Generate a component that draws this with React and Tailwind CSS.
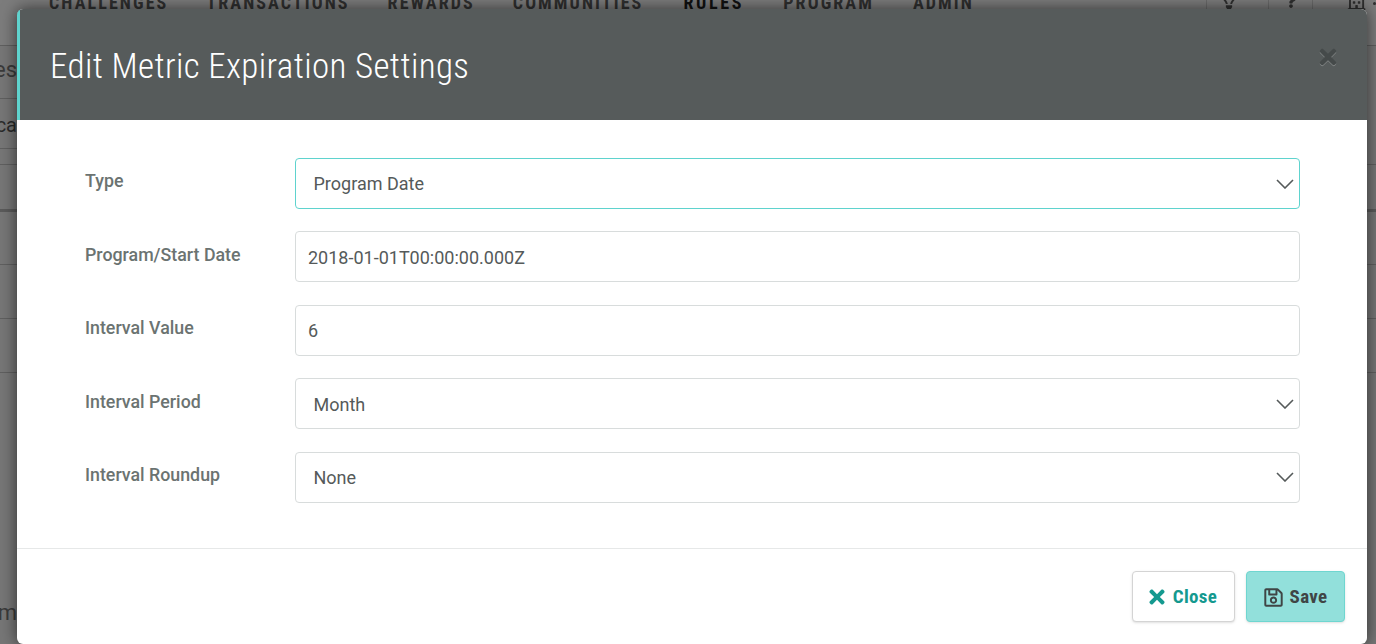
import React from 'react';
import { FaTimes, FaRegSave, FaRegLightbulb, FaQuestion, FaRegBuilding } from 'react-icons/fa';

const navItems = [
    { label: 'CHALLENGES', cls: 'text-[#2f2f2f]' },
    { label: 'TRANSACTIONS', cls: 'text-[#2f2f2f]' },
    { label: 'REWARDS', cls: 'text-[#2f2f2f]' },
    { label: 'COMMUNITIES', cls: 'text-[#2f2f2f]' },
    { label: 'RULES', cls: 'ml-[2px] tracking-[2.7px] text-[#111111]' },
    { label: 'PROGRAM', cls: 'ml-[1px] text-[#2f2f2f]' },
    { label: 'ADMIN', cls: 'ml-[1px] text-[#2f2f2f]' },
];

const Field = ({ label, value, select, active }) => (
    <div className="flex h-[51px] items-start">
        <label className="w-[210px] shrink-0 pt-[12.4px] text-[17.8px] font-medium leading-[22px] text-[#6b7371]">
            {label}
        </label>
        <div
            className={`flex h-[51px] flex-1 items-center justify-between rounded-[4px] border bg-white text-[18px] text-[#555a5a] ${
                active ? 'border-[#5fd3ce]' : 'border-[#d8dcdc]'
            } ${select ? 'pl-[17.5px] pr-[4px]' : 'pl-[12px]'}`}
        >
            <span className="pt-[0.8px]">{value}</span>
            {select && (
                <svg width="18" height="10" viewBox="0 0 18 10" fill="none" className="mr-[1px]">
                    <polyline points="1,1 9,9 17,1" stroke="#555a5a" strokeWidth="1.6" />
                </svg>
            )}
        </div>
    </div>
);

const App = () => {
    return (
        <div className="relative h-[644px] w-full overflow-hidden bg-[#767676] font-['Roboto',sans-serif]">
            {/* page behind the dialog */}
            <div className="flex h-[46px] items-start justify-between overflow-hidden border-b border-[#5f5f5f] bg-[#7c7c7c]">
                <div className="-mt-[6px] flex gap-[38px] pl-[49px] text-[18px] font-bold leading-[18px] tracking-[2.1px] [font-stretch:75%]">
                    {navItems.map((n) => (
                        <span key={n.label} className={n.cls}>{n.label}</span>
                    ))}
                </div>
                <div className="flex h-[46px] text-[#2f2f2f]">
                    <div className="flex w-[44px] justify-center border-l border-[#6a6a6a]">
                        <FaRegLightbulb size={20} className="-mt-[11px]" />
                    </div>
                    <div className="ml-[18px] flex w-[45px] justify-center border-x border-[#6a6a6a]">
                        <FaQuestion size={14} className="-mt-[6px]" />
                    </div>
                    <div className="flex w-[63px] items-start pl-[34px]">
                        <FaRegBuilding size={20} className="-mt-[10px]" />
                        <span className="ml-[7px] mt-[2px] h-[3px] w-[3px] rounded-full bg-[#2f2f2f]" />
                    </div>
                </div>
            </div>
            <div className="flex justify-between">
                <div className="w-[17px] overflow-hidden text-[#3a3a3a]">
                    <div className="flex h-[53px] items-end justify-end border-b border-[#5f5f5f] pb-[16px] text-[22px] leading-[24px]">es</div>
                    <div className="flex h-[50px] items-center justify-end border-b border-[#5f5f5f] pt-[2px] text-[20px] text-[#2a2a2a]">ca</div>
                    <div className="h-[16px] border-b border-[#5f5f5f]" />
                    <div className="h-[47px] border-b-[3px] border-[#5a5a5a]" />
                    <div className="h-[53px] border-b border-[#5f5f5f]" />
                    <div className="h-[54px] border-b border-[#5f5f5f]" />
                    <div className="h-[54px] border-b border-[#5f5f5f]" />
                    <div className="flex h-[261px] items-end justify-end pb-[9px] text-[22px] leading-[24px]">m</div>
                </div>
                <div className="w-[9px]">
                    <div className="h-[119px] border-b border-[#5f5f5f]" />
                    <div className="h-[47px] border-b-[3px] border-[#5a5a5a]" />
                    <div className="h-[53px] border-b border-[#5f5f5f]" />
                    <div className="h-[54px] border-b border-[#5f5f5f]" />
                    <div className="h-[54px] border-b border-[#5f5f5f]" />
                </div>
            </div>

            {/* dialog */}
            <div className="absolute left-[17px] top-[9px] flex h-[635px] w-[1350px] flex-col overflow-hidden rounded-[6px] bg-white shadow-[0_0_16px_rgba(0,0,0,0.6)]">
                <div className="relative flex h-[111px] items-center border-l-[3px] border-[#5fd3ce] bg-[#565b5b] pl-[30px] pt-[4px]">
                    <h2 className="text-[35px] font-light leading-[40px] tracking-[0.37px] text-white [font-stretch:75%]">
                        Edit Metric Expiration Settings
                    </h2>
                    <FaTimes size={24} className="absolute right-[27px] top-[36px] text-[#454a4a] drop-shadow-[0_1px_0_rgba(255,255,255,0.25)]" />
                </div>

                <div className="flex flex-col gap-[22.4px] pb-[45px] pl-[68px] pr-[67px] pt-[38px]">
                    <Field label="Type" value="Program Date" select active />
                    <Field label="Program/Start Date" value="2018-01-01T00:00:00.000Z" />
                    <Field label="Interval Value" value="6" />
                    <Field label="Interval Period" value="Month" select />
                    <Field label="Interval Roundup" value="None" select />
                </div>

                <div className="flex justify-end gap-[11px] border-t border-[#e6e8e8] pr-[22px] pt-[22px]">
                    <button className="flex h-[51px] w-[103px] items-center justify-center gap-[4.5px] rounded-[4px] border border-[#d4d4d4] bg-white pt-[2px] text-[19px] font-bold tracking-[0.3px] text-[#14998f] shadow-sm [font-stretch:75%]">
                        <FaTimes size={22} className="-ml-[3.5px]" />
                        Close
                    </button>
                    <button className="flex h-[51px] w-[99px] items-center justify-center gap-[6px] rounded-[4px] border border-[#6fd6d0] bg-[#92e0db] pt-[2px] text-[19px] font-bold tracking-[0.3px] text-[#3f4545] shadow-sm [font-stretch:75%]">
                        <FaRegSave size={21} className="-ml-[1px]" />
                        Save
                    </button>
                </div>
            </div>
        </div>
    );
};

export default App;
